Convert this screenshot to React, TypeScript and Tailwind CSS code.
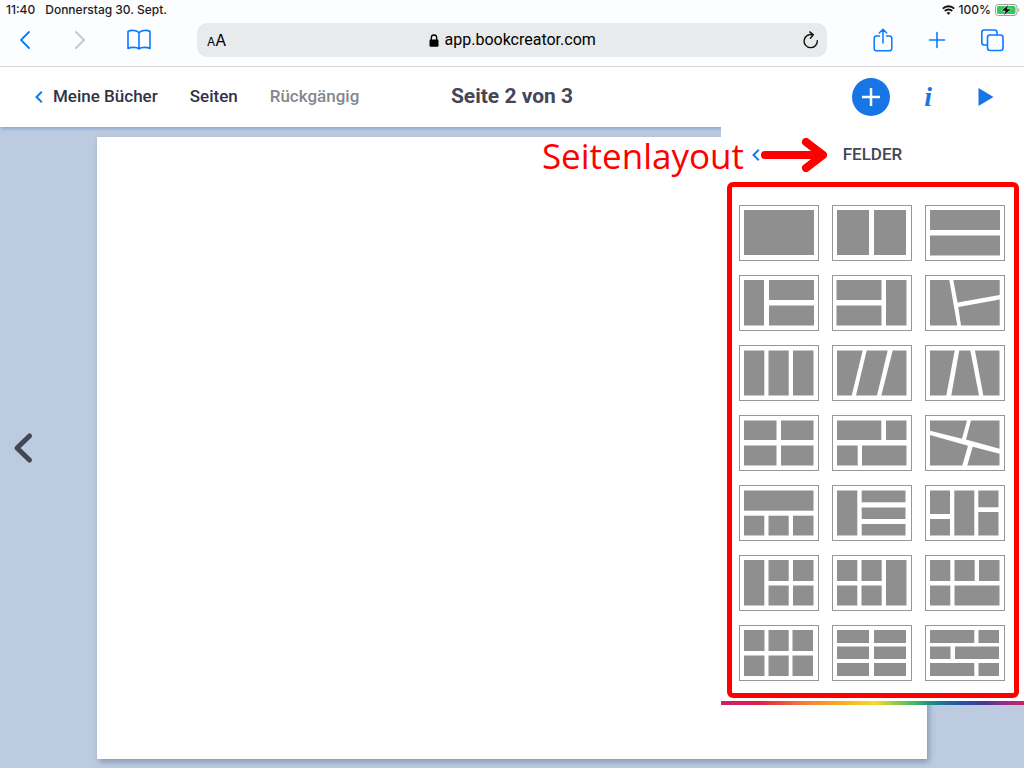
import React from "react";

type Rect = [x: number, y: number, right: number, bottom: number];
type Layout = { name: string; rects?: Rect[]; polygons?: string[] };

const layouts: Layout[] = [
  { name: "Ein Feld", rects: [[5, 5, 75, 50]] },
  { name: "Zwei Spalten", rects: [[5, 5, 37, 50], [42, 5, 74, 50]] },
  { name: "Zwei Zeilen", rects: [[5, 5, 75, 25], [5, 30.5, 75, 50.5]] },
  { name: "Spalte links, zwei Felder", rects: [[5, 5, 25, 50.5], [30, 5, 75, 25], [30, 30.5, 75, 50.5]] },
  { name: "Zwei Felder, Spalte rechts", rects: [[4.5, 5, 49.5, 25], [4.5, 30.5, 49.5, 50.5], [54, 5, 74.5, 50.5]] },
  {
    name: "Drei schräge Felder",
    polygons: ["5,5 24.3,5 32.3,50.5 5,50.5", "28.3,5 74.7,5 74.7,20 32.5,27.5", "33.3,32 74.7,24.5 74.7,50.5 36,50.5"],
  },
  { name: "Drei Spalten", rects: [[5, 5.5, 25.3, 50.5], [29.5, 5.5, 49.7, 50.5], [54, 5.5, 74.5, 50.5]] },
  {
    name: "Drei schräge Spalten",
    polygons: ["5,5.5 30.7,5.5 19.7,50.5 5,50.5", "34.7,5.5 55.7,5.5 45,50.5 24,50.5", "60.7,5.5 74.5,5.5 74.5,50.5 49.3,50.5"],
  },
  {
    name: "Trapez",
    polygons: ["5,5.5 29.7,5.5 21.3,50.5 5,50.5", "34.3,5.5 45.3,5.5 54,50.5 26.3,50.5", "50,5.5 74.5,5.5 74.5,50.5 58.3,50.5"],
  },
  { name: "Vier Felder", rects: [[5, 5.5, 37.5, 25], [42, 5.5, 74.5, 25], [5, 30.5, 37.5, 50.5], [42, 30.5, 74.5, 50.5]] },
  { name: "Vier versetzte Felder", rects: [[5, 5.5, 49.3, 25], [54, 5.5, 74.5, 25], [5, 30.5, 25.7, 50.5], [30, 30.5, 74.5, 50.5]] },
  {
    name: "Vier schräge Felder",
    polygons: [
      "5,5.5 42,5.5 37,23.7 5,15.7",
      "46,5.5 74.5,5.5 74.5,33.7 41,24.5",
      "5,20 43,30.7 37.3,50.5 5,50.5",
      "47.7,31.7 74.5,38.7 74.5,50.5 42.3,50.5",
    ],
  },
  { name: "Zeile oben, drei Felder", rects: [[5, 5.5, 74.5, 25.7], [5, 30.7, 25.3, 50.5], [29.5, 30.7, 49.7, 50.5], [54, 30.7, 74.5, 50.5]] },
  { name: "Spalte links, drei Zeilen", rects: [[5, 5.5, 25.3, 50.5], [29.7, 5.5, 73.5, 17.3], [29.7, 22.5, 73.5, 34], [29.7, 39, 73.5, 50.5]] },
  {
    name: "Fünf versetzte Felder",
    rects: [[5, 5.5, 25, 29], [5, 34, 25, 50.5], [29.3, 5.5, 49.3, 50.5], [53.3, 5.5, 73.5, 22.3], [53.3, 27, 73.5, 50.5]],
  },
  {
    name: "Spalte links, vier Felder",
    rects: [[5, 5, 25.3, 50.5], [29.5, 5, 49.7, 26], [54, 5, 74.5, 26], [29.5, 30.5, 49.7, 50.5], [54, 30.5, 74.5, 50.5]],
  },
  {
    name: "Vier Felder, Spalte rechts",
    rects: [[5, 5, 25.3, 26], [29.5, 5, 49.7, 26], [5, 30.5, 25.3, 50.5], [29.5, 30.5, 49.7, 50.5], [54, 5, 74.5, 50.5]],
  },
  {
    name: "Vier Felder, Zeile unten",
    rects: [[5, 5, 25.3, 26], [29.5, 5, 49.7, 26], [54, 5, 74.5, 26], [5, 30.5, 25.3, 50.5], [29.5, 30.5, 74.5, 50.5]],
  },
  {
    name: "Sechs Felder",
    rects: [[5, 5, 25.5, 26], [29.5, 5, 49.7, 26], [53.5, 5, 74, 26], [5, 30.5, 25.5, 51], [29.5, 30.5, 49.7, 51], [53.5, 30.5, 74, 51]],
  },
  {
    name: "Sechs Felder in drei Zeilen",
    rects: [[5, 5, 37, 18], [42, 5, 74, 18], [5, 21.5, 37, 34], [42, 21.5, 74, 34], [5, 38, 37, 51], [42, 38, 74, 51]],
  },
  {
    name: "Sechs versetzte Felder",
    rects: [[5, 5, 49.3, 18], [53.5, 5, 74, 18], [5, 21.5, 25.5, 34], [30, 21.5, 74, 34], [5, 38, 49.3, 51], [53.5, 38, 74, 51]],
  },
];

function LayoutThumb({ layout }: { layout: Layout }) {
  return (
    <svg viewBox="0 0 80 56" className="block h-14 w-20" aria-hidden="true">
      <rect x="0.5" y="0.5" width="79" height="55" fill="#fff" stroke="#979797" />
      <g fill="#8f8f8f">
        {layout.rects?.map(([x, y, r, b], i) => (
          <rect key={i} x={x} y={y} width={r - x} height={b - y} />
        ))}
        {layout.polygons?.map((points, i) => (
          <polygon key={i} points={points} />
        ))}
      </g>
    </svg>
  );
}

function StatusBar() {
  return (
    <div className="flex h-[19px] items-center justify-between pr-1 pl-1.5 font-['Inter',sans-serif] text-xs font-medium text-[#1c1c1e]">
      <div className="flex gap-2.5">
        <span>11:40</span>
        <span>Donnerstag 30. Sept.</span>
      </div>
      <div className="flex items-center gap-1">
        <svg viewBox="0 0 13 10" className="h-2.5 w-[13px]" fill="none" stroke="#111" strokeWidth="1.9" aria-hidden="true">
          <path d="M.8 3.6a8.2 8.2 0 0 1 11.4 0M2.8 6a5.2 5.2 0 0 1 7.4 0" />
          <path d="M6.5 9.8 4.6 7.9a2.7 2.7 0 0 1 3.8 0z" fill="#111" stroke="none" />
        </svg>
        <span>100%</span>
        <svg viewBox="0 0 25 12" className="h-3 w-[25px]" aria-hidden="true">
          <rect x=".5" y=".5" width="21.5" height="11" rx="3" fill="#fff" stroke="#9b9b9b" />
          <rect x="2" y="2" width="18.5" height="8" rx="1.8" fill="#34c759" />
          <path d="M23.3 4v4c1.4-.6 1.4-3.4 0-4z" fill="#9b9b9b" />
          <path d="M13.6.4 6 6.900h4.200L8.500 11.700l8-6.700h-4.200z" fill="#111" stroke="#fff" strokeWidth=".5" />
        </svg>
      </div>
    </div>
  );
}

function BrowserBar() {
  return (
    <div className="flex h-[42px] items-center text-[#0a7aff]">
      <div className="flex w-[197px] shrink-0 items-center pl-[18px]">
        <button aria-label="Zurück">
          <svg viewBox="0 0 14 20" className="h-5 w-3.5" fill="none" stroke="currentColor" strokeWidth="1.8" strokeLinecap="round" strokeLinejoin="round">
            <path d="M11 2 3 10l8 8" />
          </svg>
        </button>
        <button aria-label="Vorwärts" className="ml-[42px] text-[#c3c5c8]">
          <svg viewBox="0 0 14 20" className="h-5 w-3.5" fill="none" stroke="currentColor" strokeWidth="1.8" strokeLinecap="round" strokeLinejoin="round">
            <path d="m2 2 8 8-8 8" />
          </svg>
        </button>
        <button aria-label="Lesezeichen" className="ml-[38px]">
          <svg viewBox="0 0 26 22" className="h-[22px] w-[26px]" fill="none" stroke="currentColor" strokeWidth="1.6" strokeLinejoin="round">
            <path d="M13 4C11.500 1 4.500.8 2 2.500v17c2.500-1.500 9-1.500 11 .3 2-1.800 8.500-1.800 11-.3v-17C21.500.8 14.500 1 13 4zM13 4v15.800" />
          </svg>
        </button>
      </div>
      <div className="flex h-[34px] min-w-0 flex-1 items-center justify-between rounded-[10px] bg-[#e8eaeb] pr-2 pl-2.5 font-['Inter',sans-serif] text-black">
        <button aria-label="Textgröße" className="flex items-baseline">
          <span className="text-xs">A</span>
          <span className="text-base">A</span>
        </button>
        <button className="mr-1 flex items-center gap-1.5 text-base">
          <svg viewBox="0 0 10 13" className="h-[13px] w-2.5" aria-hidden="true">
            <path d="M2.3 6V3.700a2.700 2.700 0 0 1 5.400 0V6" fill="none" stroke="#000" strokeWidth="1.3" />
            <rect x=".5" y="5.500" width="9" height="7.200" rx="1.300" />
          </svg>
          <span className="font-['Roboto',sans-serif]">app.bookcreator.com</span>
        </button>
        <button aria-label="Neu laden">
          <svg viewBox="0 0 17 18" className="h-[18px] w-[17px]" fill="none" stroke="#111" strokeWidth="1.400" strokeLinecap="round" strokeLinejoin="round">
            <path d="M10.800 3.800A6.600 6.600 0 1 0 15.300 9.600M7.800.9l3.500 2.900-2.900 3.400" />
          </svg>
        </button>
      </div>
      <div className="flex w-[197px] shrink-0 items-center justify-end pr-5">
        <button aria-label="Teilen">
          <svg viewBox="0 0 20 24" className="h-6 w-5" fill="none" stroke="currentColor" strokeWidth="1.500" strokeLinecap="round" strokeLinejoin="round">
            <path d="M6.500 8H3.500A2.300 2.300 0 0 0 1.200 10.300v10.200a2.300 2.300 0 0 0 2.300 2.300h13a2.300 2.300 0 0 0 2.300-2.300V10.300A2.300 2.300 0 0 0 16.500 8h-3M10 15V1.500M6.300 5 10 1.300 13.700 5" />
          </svg>
        </button>
        <button aria-label="Neuer Tab" className="ml-[35px]">
          <svg viewBox="0 0 18 18" className="size-[18px]" stroke="currentColor" strokeWidth="1.600" strokeLinecap="round">
            <path d="M9 1.500v15M1.500 9h15" />
          </svg>
        </button>
        <button aria-label="Tabs" className="ml-[34px]">
          <svg viewBox="0 0 24 24" className="size-6" fill="none" stroke="currentColor" strokeWidth="1.600">
            <rect x="7.500" y="7" width="15.500" height="15.500" rx="2.500" />
            <path d="M7.300 17H4.300a2.500 2.500 0 0 1-2.500-2.500V4.500A2.500 2.500 0 0 1 4.300 2h10.200A2.500 2.500 0 0 1 17 4.500V7" />
          </svg>
        </button>
      </div>
    </div>
  );
}

function BookHeader() {
  return (
    <header className="relative grid h-15 grid-cols-[1fr_auto_1fr] items-center bg-white font-['Roboto',sans-serif] text-[17px] font-medium text-[#2f3347] shadow-[0_3px_3px_-1px_#8ca8cd]">
      <nav className="flex items-center gap-8 pl-[34px]">
        <a href="#books" className="flex items-center gap-2.5">
          <svg viewBox="0 0 9 14" className="h-3.5 w-[9px]" fill="none" stroke="#1677e8" strokeWidth="2" aria-hidden="true">
            <path d="M7.800 1.700 2.500 7l5.300 5.300" />
          </svg>
          Meine Bücher
        </a>
        <a href="#pages">Seiten</a>
        <button className="text-[#85878b]">Rückgängig</button>
      </nav>
      <h1 className="text-[21px] font-bold text-[#444755]">Seite 2 von 3</h1>
      <div className="flex items-center justify-end pr-[30px] text-[#1775e5]">
        <button aria-label="Hinzufügen" className="flex size-[38px] items-center justify-center rounded-full bg-[#1775e5] text-white">
          <svg viewBox="0 0 18 18" className="size-[18px]" stroke="currentColor" strokeWidth="2.500">
            <path d="M9 0v18M0 9h18" />
          </svg>
        </button>
        <button aria-label="Information" className="ml-[34px] font-['Liberation_Serif',serif] text-[28px] leading-8 font-bold italic">
          i
        </button>
        <button aria-label="Abspielen" className="ml-[46px]">
          <svg viewBox="0 0 16 20" className="h-5 w-4" fill="currentColor">
            <path d="M.5 1 15.500 10 .5 19z" />
          </svg>
        </button>
      </div>
    </header>
  );
}

function LayoutPanel() {
  return (
    <aside className="absolute top-0 right-0 z-10 w-[303px] bg-white">
      <div className="grid h-[55px] grid-cols-[1fr_auto_1fr] items-center font-['Roboto',sans-serif] text-[#444755]">
        <button aria-label="Zurück" className="ml-[30px] w-3">
          <svg viewBox="0 0 9 14" className="h-3.5 w-[9px]" fill="none" stroke="#1677e8" strokeWidth="2">
            <path d="M7.800 1.700 2.500 7l5.300 5.300" />
          </svg>
        </button>
        <h2 className="text-[17px] font-medium">FELDER</h2>
      </div>
      <div className="mr-[5px] ml-1.5 rounded-md border-[5px] border-[#ff0000] pt-[18px] pb-3">
        <ul className="grid grid-cols-[repeat(3,80px)] justify-center gap-x-[13px] gap-y-3.5 pr-0.5">
          {layouts.map((layout) => (
            <li key={layout.name}>
              <button aria-label={layout.name} className="block">
                <LayoutThumb layout={layout} />
              </button>
            </li>
          ))}
        </ul>
      </div>
      <div className="mt-[3px] h-1 bg-[linear-gradient(90deg,#cf1f6b_0%,#d81f4c_12%,#f47b3c_27%,#fba826_39%,#f8d926_51%,#4fba5c_63%,#158d86_70%,#2456a8_78%,#4d3596_87%,#8e2d8c_93%,#cf1f6b_100%)]" />
    </aside>
  );
}

function Annotation() {
  return (
    <div className="absolute top-0 right-[196px] z-20 flex h-14 items-center gap-4 text-[#ff0000]">
      <span className="font-['Open_Sans',sans-serif] text-[35px] leading-none">Seitenlayout</span>
      <svg viewBox="0 0 68 34" className="h-[34px] w-[68px]" fill="none" stroke="currentColor" strokeWidth="8" strokeLinecap="round" strokeLinejoin="round" aria-hidden="true">
        <path d="M5 17h58M46 4l17 13-17 13" />
      </svg>
    </div>
  );
}

export default function App() {
  return (
    <div className="flex min-h-screen flex-col bg-[#bccbdf]">
      <div className="border-b border-[#d3d7d9] bg-[#fcfdfe] pb-[5px]">
        <StatusBar />
        <BrowserBar />
      </div>
      <BookHeader />
      <main className="relative flex flex-1 pt-2.5 pb-[9px]">
        <button aria-label="Vorherige Seite" className="flex w-[97px] shrink-0 items-center pl-3 text-[#434751]">
          <svg viewBox="0 0 22 32" className="h-8 w-[22px]" fill="none" stroke="currentColor" strokeWidth="5" strokeLinecap="round" strokeLinejoin="round">
            <path d="M17.500 4 5 16l12.500 12" />
          </svg>
        </button>
        <div className="mr-[97px] flex-1 bg-white shadow-[2px_3px_6px_#8497b3]" />
        <LayoutPanel />
        <Annotation />
      </main>
    </div>
  );
}
